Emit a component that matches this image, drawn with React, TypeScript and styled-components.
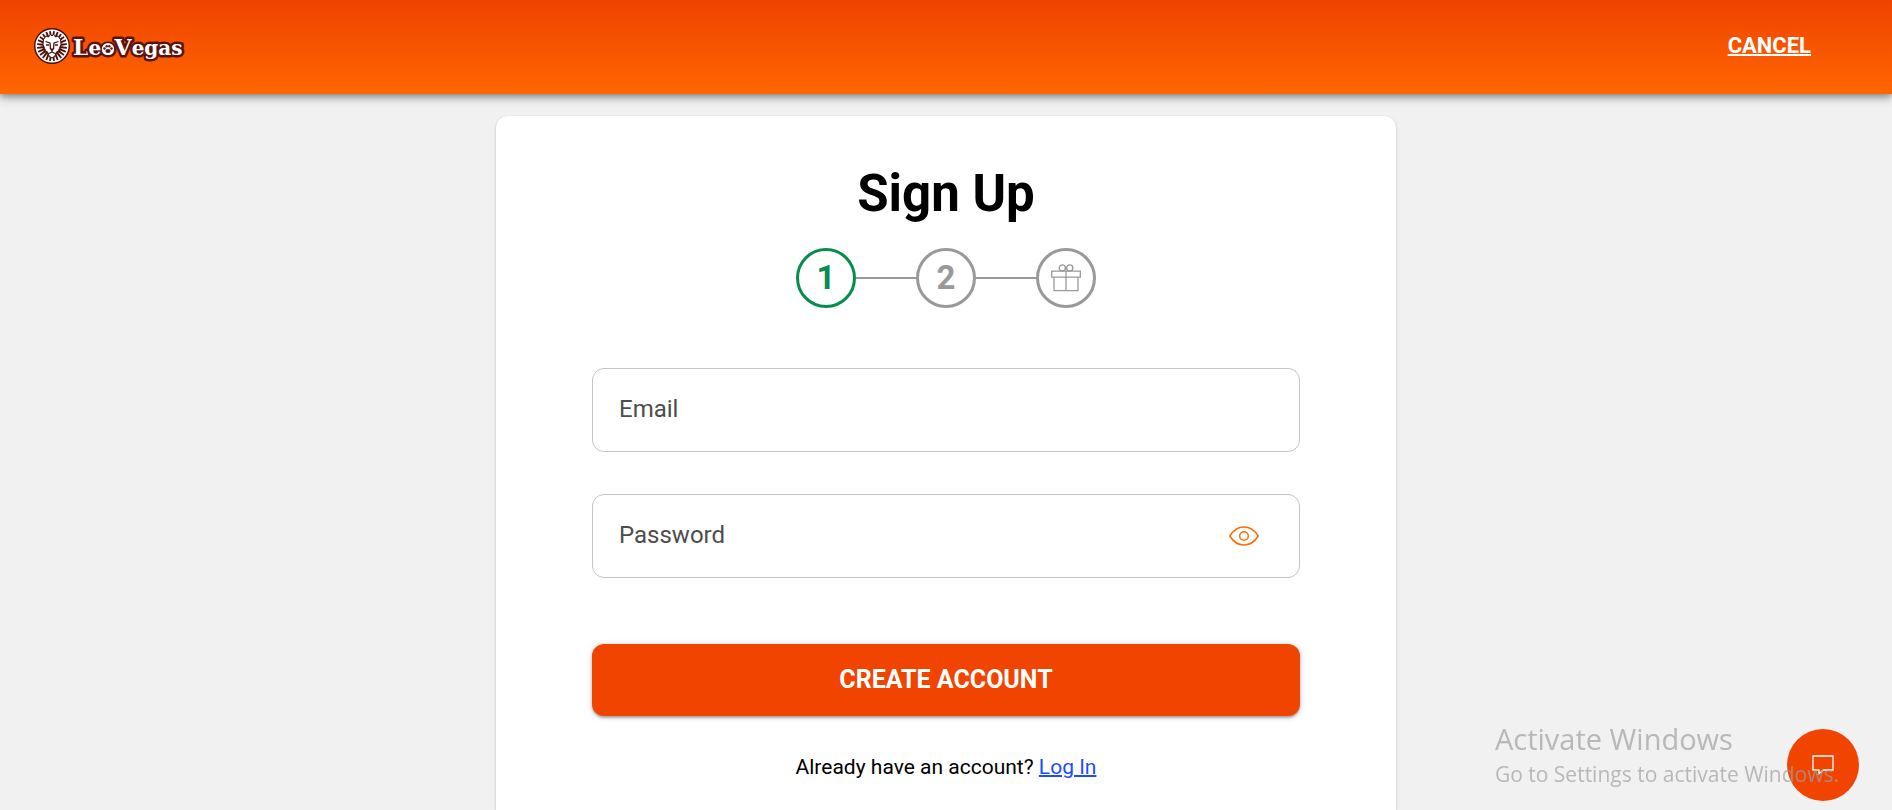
import React, { useState } from "react";
import styled, { createGlobalStyle } from "styled-components";

const GlobalStyle = createGlobalStyle`
  *, *::before, *::after { box-sizing: border-box; }
  body {
    margin: 0;
    background: #f1f1f1;
    color: #000;
    font-family: Roboto, "Liberation Sans", sans-serif;
  }
`;

const Page = styled.div`
  display: flex;
  flex-direction: column;
  min-height: 100vh;
`;

const Header = styled.header`
  display: flex;
  align-items: center;
  justify-content: space-between;
  height: 94px;
  padding: 0 81px 2px 32px;
  background: linear-gradient(#ef4300, #ff6600);
  box-shadow: 0 2px 6px 0 rgba(0, 0, 0, 0.3), 0 4px 10px 0 rgba(0, 0, 0, 0.25);
  z-index: 1;
`;

const LogoLink = styled.a`
  display: flex;
`;

const CancelLink = styled.a`
  color: #fff;
  font-size: 22px;
  line-height: 24px;
  font-weight: 700;
  text-transform: uppercase;
  text-decoration: underline;
  text-decoration-thickness: 2px;
`;

const Main = styled.main`
  display: flex;
  flex: 1;
  justify-content: center;
  padding-top: 22px;
`;

const Card = styled.section`
  display: flex;
  flex-direction: column;
  width: 100%;
  max-width: 900px;
  padding: 48px 96px 24px;
  background: #fff;
  border-radius: 12px 12px 0 0;
  box-shadow: 0 1px 1px 0 rgba(0, 0, 0, 0.14), 0 1px 3px 0 rgba(0, 0, 0, 0.2);
`;

const Title = styled.h1`
  margin: 0 0 24px;
  font-size: 51px;
  line-height: 60px;
  font-weight: 700;
  text-align: center;
`;

const Steps = styled.ol`
  display: flex;
  align-items: center;
  justify-content: center;
  margin: 0 0 60px;
  padding: 0;
  list-style: none;
`;

const Step = styled.li<{ $active?: boolean }>`
  display: flex;
  align-items: center;
  color: ${({ $active }) => ($active ? "#078d4e" : "#999")};

  &:not(:first-child)::before {
    content: "";
    width: 60px;
    height: 2px;
    background: #999;
  }
`;

const StepCircle = styled.span`
  display: flex;
  align-items: center;
  justify-content: center;
  width: 60px;
  height: 60px;
  border: 3px solid currentColor;
  border-radius: 50%;
  font-size: 33px;
  line-height: 36px;
  font-weight: 700;
`;

const Form = styled.form`
  display: flex;
  flex-direction: column;
  gap: 42px;
`;

const Field = styled.div`
  display: grid;
  grid-template-columns: 1fr auto;
  align-items: center;
  height: 84px;
  padding: 0 40px 0 26px;
  border: 1px solid #c4c4c4;
  border-radius: 12px;

  &:focus-within { border-color: #ff6600; }
`;

const FieldInput = styled.input`
  grid-area: 1 / 1;
  width: 100%;
  height: 82px;
  padding: 0;
  border: 0;
  outline: 0;
  background: transparent;
  color: #000;
  font: 400 24px/32px Roboto, "Liberation Sans", sans-serif;
`;

const FieldLabel = styled.label`
  grid-area: 1 / 1;
  padding-bottom: 2px;
  color: #4d4d4d;
  font-size: 24px;
  line-height: 32px;
  pointer-events: none;

  ${FieldInput}:focus + &,
  ${FieldInput}:not(:placeholder-shown) + & {
    align-self: start;
    font-size: 16px;
  }
`;

const IconButton = styled.button`
  display: flex;
  padding: 0;
  border: 0;
  background: none;
  color: #ff6b00;
  cursor: pointer;
`;

const SubmitButton = styled.button`
  height: 72px;
  margin-top: 24px;
  border: 0;
  border-radius: 12px;
  background: #f04400;
  box-shadow: 0 2px 2px 0 rgba(0, 0, 0, 0.24), 0 1px 6px 0 rgba(0, 0, 0, 0.2);
  color: #fff;
  font: 700 25px/32px Roboto, "Liberation Sans", sans-serif;
  text-transform: uppercase;
  cursor: pointer;
`;

const LoginPrompt = styled.p`
  margin: 39px 0 0;
  font-size: 21px;
  line-height: 24px;
  text-align: center;
`;

const LoginLink = styled.a`
  color: #1a4dff;
  text-decoration: underline;
  text-decoration-thickness: 2px;
`;

const ChatButton = styled.button`
  position: fixed;
  right: 33px;
  bottom: 9px;
  z-index: 2;
  display: flex;
  align-items: center;
  justify-content: center;
  width: 72px;
  height: 72px;
  padding: 0;
  border: 0;
  border-radius: 50%;
  background: #f04400;
  color: #fff;
  cursor: pointer;
`;

const Activation = styled.aside`
  position: fixed;
  right: 53px;
  bottom: 21px;
  z-index: 3;
  color: rgba(160, 160, 160, 0.7);
  font-family: "Segoe UI", "Open Sans", sans-serif;
  white-space: nowrap;
  pointer-events: none;
`;

const ActivationTitle = styled.p`
  margin: 0;
  font-size: 29px;
  line-height: 40px;
`;

const ActivationText = styled.p`
  margin: 0;
  font-size: 21px;
  line-height: 30px;
`;

const rays = Array.from({ length: 24 }, (_, i) => (i * 360) / 24);

function Logo() {
  return (
    <svg width="156" height="40" viewBox="0 0 156 40" role="img" aria-label="LeoVegas">
      <circle cx="20" cy="20" r="18" fill="#4a0f0a" />
      <circle cx="20" cy="20" r="15.8" fill="none" stroke="#fff" strokeWidth="1.5" />
      <g fill="#fff">
        {rays.map((a) => (
          <path key={a} d="M20 11.500L18.800 4.500h2.400z" transform={`rotate(${a} 20 20)`} />
        ))}
      </g>
      <path
        d="M11.500 13.500L14 10l2.500 1 2-2.500L20 10l1.500-1.500 2 2.500 2.500-1 2.500 3.500.5 5-2.500 6-2.500 2-1 3.500L20 32l-3-2-1-3.500-2.500-2-2.500-6z"
        fill="#fff"
        stroke="#4a0f0a"
        strokeWidth="1"
      />
      <path
        d="M13.500 15.500l4.500 1.500.5 6M26.500 15.500L22 17l-.5 6M14 19h3M23 19h3M17 27.500l3-1.500 3 1.500M20 24v2"
        fill="none"
        stroke="#4a0f0a"
        strokeWidth="1.300"
      />
      <path d="M17.500 22.500h5L20 25.500z" fill="#4a0f0a" />
      <text
        x="41"
        y="29"
        fill="#fff"
        stroke="#5a120c"
        strokeWidth="5"
        strokeLinejoin="round"
        fontFamily="'DejaVu Serif', serif"
        fontWeight="700"
        fontSize="20"
        paintOrder="stroke"
      >
        <tspan fontSize="22">L</tspan>eo<tspan fontSize="22">V</tspan>egas
      </text>
      <circle cx="76" cy="23" r="6" fill="#fff" />
      <g fill="#5a120c">
        <ellipse cx="76" cy="25" rx="2.600" ry="2" />
        <circle cx="72.500" cy="22.500" r="1.200" />
        <circle cx="74.700" cy="20.300" r="1.200" />
        <circle cx="77.300" cy="20.300" r="1.200" />
        <circle cx="79.500" cy="22.500" r="1.200" />
      </g>
    </svg>
  );
}

function GiftIcon() {
  return (
    <svg width="30" height="28" viewBox="0 0 30 28" fill="none" stroke="currentColor" strokeWidth="1.3" aria-label="Bonus">
      <path d="M.7 7.200h28.600v6H.7zM3 13.200v13.400h24V13.200M15 7v19.500" />
      <circle cx="11.300" cy="4" r="3.100" />
      <circle cx="18.700" cy="4" r="3.100" />
    </svg>
  );
}

function EyeIcon() {
  return (
    <svg width="30" height="20" viewBox="0 0 30 20" fill="none" stroke="currentColor" strokeWidth="1.500" aria-hidden="true">
      <path d="M.8 10C4.500 4 9.500 1 15 1s10.500 3 14.200 9C25.500 16 20.500 19 15 19S4.500 16 .8 10z" strokeLinejoin="round" />
      <circle cx="15" cy="10" r="4.300" />
    </svg>
  );
}

function ChatIcon() {
  return (
    <svg width="22" height="20" viewBox="0 0 22 20" fill="none" stroke="currentColor" strokeWidth="1.300" aria-hidden="true">
      <path d="M1 1h20v14H11.500L7 18.700V15H1z" />
    </svg>
  );
}

export default function App() {
  const [visible, setVisible] = useState(false);

  return (
    <Page>
      <GlobalStyle />
      <Header>
        <LogoLink href="#home">
          <Logo />
        </LogoLink>
        <CancelLink href="#cancel">Cancel</CancelLink>
      </Header>
      <Main>
        <Card>
          <Title>Sign Up</Title>
          <Steps>
            <Step $active aria-current="step">
              <StepCircle>1</StepCircle>
            </Step>
            <Step>
              <StepCircle>2</StepCircle>
            </Step>
            <Step>
              <StepCircle>
                <GiftIcon />
              </StepCircle>
            </Step>
          </Steps>
          <Form onSubmit={(e) => e.preventDefault()}>
            <Field>
              <FieldInput id="email" type="email" placeholder=" " autoComplete="email" />
              <FieldLabel htmlFor="email">Email</FieldLabel>
            </Field>
            <Field>
              <FieldInput
                id="password"
                type={visible ? "text" : "password"}
                placeholder=" "
                autoComplete="new-password"
              />
              <FieldLabel htmlFor="password">Password</FieldLabel>
              <IconButton type="button" aria-label="Show password" onClick={() => setVisible(!visible)}>
                <EyeIcon />
              </IconButton>
            </Field>
            <SubmitButton type="submit">Create account</SubmitButton>
          </Form>
          <LoginPrompt>
            Already have an account? <LoginLink href="#login">Log In</LoginLink>
          </LoginPrompt>
        </Card>
      </Main>
      <ChatButton type="button" aria-label="Open chat">
        <ChatIcon />
      </ChatButton>
      <Activation>
        <ActivationTitle>Activate Windows</ActivationTitle>
        <ActivationText>Go to Settings to activate Windows.</ActivationText>
      </Activation>
    </Page>
  );
}
